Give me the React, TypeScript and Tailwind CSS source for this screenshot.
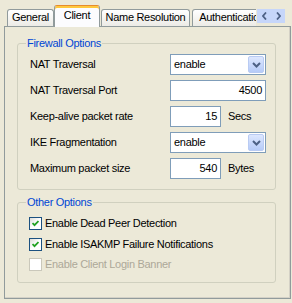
const font = { fontFamily: '"Liberation Sans", Arial, sans-serif' };

function Tab({ label, w, ml = '' }: { label: string; w: string; ml?: string }) {
  return (
    <div
      className={`${w} ${ml} mb-px flex h-[17px] shrink-0 items-center justify-center rounded-t-[3px] border border-b-0 border-[#919B9C] bg-gradient-to-b from-white to-[#ECEBE6] pb-px`}
    >
      <span className="whitespace-nowrap">{label}</span>
    </div>
  );
}

function Chevron({ dir }: { dir: 'left' | 'right' | 'down' }) {
  if (dir === 'down') {
    return (
      <svg width="9" height="6" viewBox="0 0 9 6">
        <path d="M1 1 L4.5 4.5 L8 1" fill="none" stroke="#4D6185" strokeWidth="2" />
      </svg>
    );
  }
  return (
    <svg width="5" height="8" viewBox="0 0 5 8">
      <path
        d={dir === 'left' ? 'M4 0.5 L1 4 L4 7.5' : 'M1 0.5 L4 4 L1 7.5'}
        fill="none"
        stroke="#4D6185"
        strokeWidth="1.8"
      />
    </svg>
  );
}

function Select({ value }: { value: string }) {
  return (
    <div className="flex h-[21px] w-[96px] items-stretch border border-[#7F9DB9] bg-white">
      <span className="flex flex-1 items-center pl-[3px]">{value}</span>
      <div className="m-px flex w-[16px] items-center justify-center rounded-[2px] border border-[#B9CBF3] bg-gradient-to-b from-[#DDE7FE] to-[#B6CBF8]">
        <Chevron dir="down" />
      </div>
    </div>
  );
}

function Field({ value, w }: { value: string; w: string }) {
  return (
    <div className={`${w} flex h-[21px] items-center justify-end border border-[#7F9DB9] bg-white pr-[3px]`}>
      {value}
    </div>
  );
}

function Check({ label, checked = false, disabled = false }: { label: string; checked?: boolean; disabled?: boolean }) {
  return (
    <div className="flex h-[13px] items-center">
      <div
        className={`flex h-[13px] w-[13px] items-center justify-center border ${
          disabled ? 'border-[#CAC8BB] bg-white' : 'border-[#1C5180] bg-gradient-to-br from-[#DCDCD7] via-white to-white'
        }`}
      >
        {checked && (
          <svg width="7" height="7" viewBox="0 0 7 7">
            <path d="M0.5 3 L2.5 5.2 L6.5 1" fill="none" stroke="#21A121" strokeWidth="1.8" />
          </svg>
        )}
      </div>
      <span className={`ml-[3px] whitespace-nowrap ${disabled ? 'text-[#ACA899]' : 'text-black'}`}>{label}</span>
    </div>
  );
}

function Group({ title, h, mt, children }: { title: string; h: string; mt: string; children: React.ReactNode }) {
  return (
    <div className={`relative ${mt} ml-[12px] ${h} w-[259px] rounded-[3px] border border-[#D0D0BF]`}>
      <span className="absolute left-[8px] top-[-7px] bg-[#ECE9D8] px-px text-[#0046D5]">{title}</span>
      {children}
    </div>
  );
}

export default function App() {
  return (
    <div
      className="h-[303px] w-[292px] overflow-hidden bg-[#ECE9D8] pl-[4px] pr-px pt-[5px] text-[11px] leading-[13px] tracking-[-0.3px] text-black"
      style={font}
    >
      <div className="flex h-[21px] pl-[3px]">
        <div className="relative z-10 flex h-[22px] w-[249px] shrink-0 items-end overflow-hidden">
          <Tab label="General" w="w-[47px]" />
          <div className="flex h-[22px] w-[46px] shrink-0 items-center justify-center rounded-t-[3px] border border-b-0 border-[#919B9C] border-t-[#E68B2C] bg-[#FCFCFE] pb-[2px] shadow-[inset_0_2px_0_#FFC83C]">
            Client
          </div>
          <Tab label="Name Resolution" w="w-[89px]" ml="ml-px" />
          <Tab label="Authentication" w="w-[80px]" ml="ml-[2px]" />
        </div>
        <div className="ml-px mt-[4px] flex h-[14px]">
          <div className="flex w-[14px] items-center justify-center bg-[#C6D6FA]">
            <Chevron dir="left" />
          </div>
          <div className="flex w-[14px] items-center justify-center bg-[#C6D6FA]">
            <Chevron dir="right" />
          </div>
        </div>
      </div>

      <div className="h-[273px] border border-[#919B9C] bg-[#ECE9D8] shadow-[inset_-1px_-1px_0_#D4D1C6]">
        <Group title="Firewall Options" h="h-[147px]" mt="mt-[16px]">
          <div className="flex flex-col gap-[5px] pl-[12px] pt-[10px]">
            <div className="flex h-[21px] items-center">
              <span className="w-[140px]">NAT Traversal</span>
              <Select value="enable" />
            </div>
            <div className="flex h-[21px] items-center">
              <span className="w-[140px]">NAT Traversal Port</span>
              <Field value="4500" w="w-[96px]" />
            </div>
            <div className="flex h-[21px] items-center">
              <span className="w-[140px]">Keep-alive packet rate</span>
              <Field value="15" w="w-[51px]" />
              <span className="ml-[7px]">Secs</span>
            </div>
            <div className="flex h-[21px] items-center">
              <span className="w-[140px]">IKE Fragmentation</span>
              <Select value="enable" />
            </div>
            <div className="flex h-[21px] items-center">
              <span className="w-[140px]">Maximum packet size</span>
              <Field value="540" w="w-[51px]" />
              <span className="ml-[7px]">Bytes</span>
            </div>
          </div>
        </Group>

        <Group title="Other Options" h="h-[81px]" mt="mt-[12px]">
          <div className="flex flex-col gap-[7px] pl-[11px] pt-[14px]">
            <div className="mb-px">
              <Check label="Enable Dead Peer Detection" checked />
            </div>
            <Check label="Enable ISAKMP Failure Notifications" checked />
            <Check label="Enable Client Login Banner" disabled />
          </div>
        </Group>
      </div>
    </div>
  );
}
